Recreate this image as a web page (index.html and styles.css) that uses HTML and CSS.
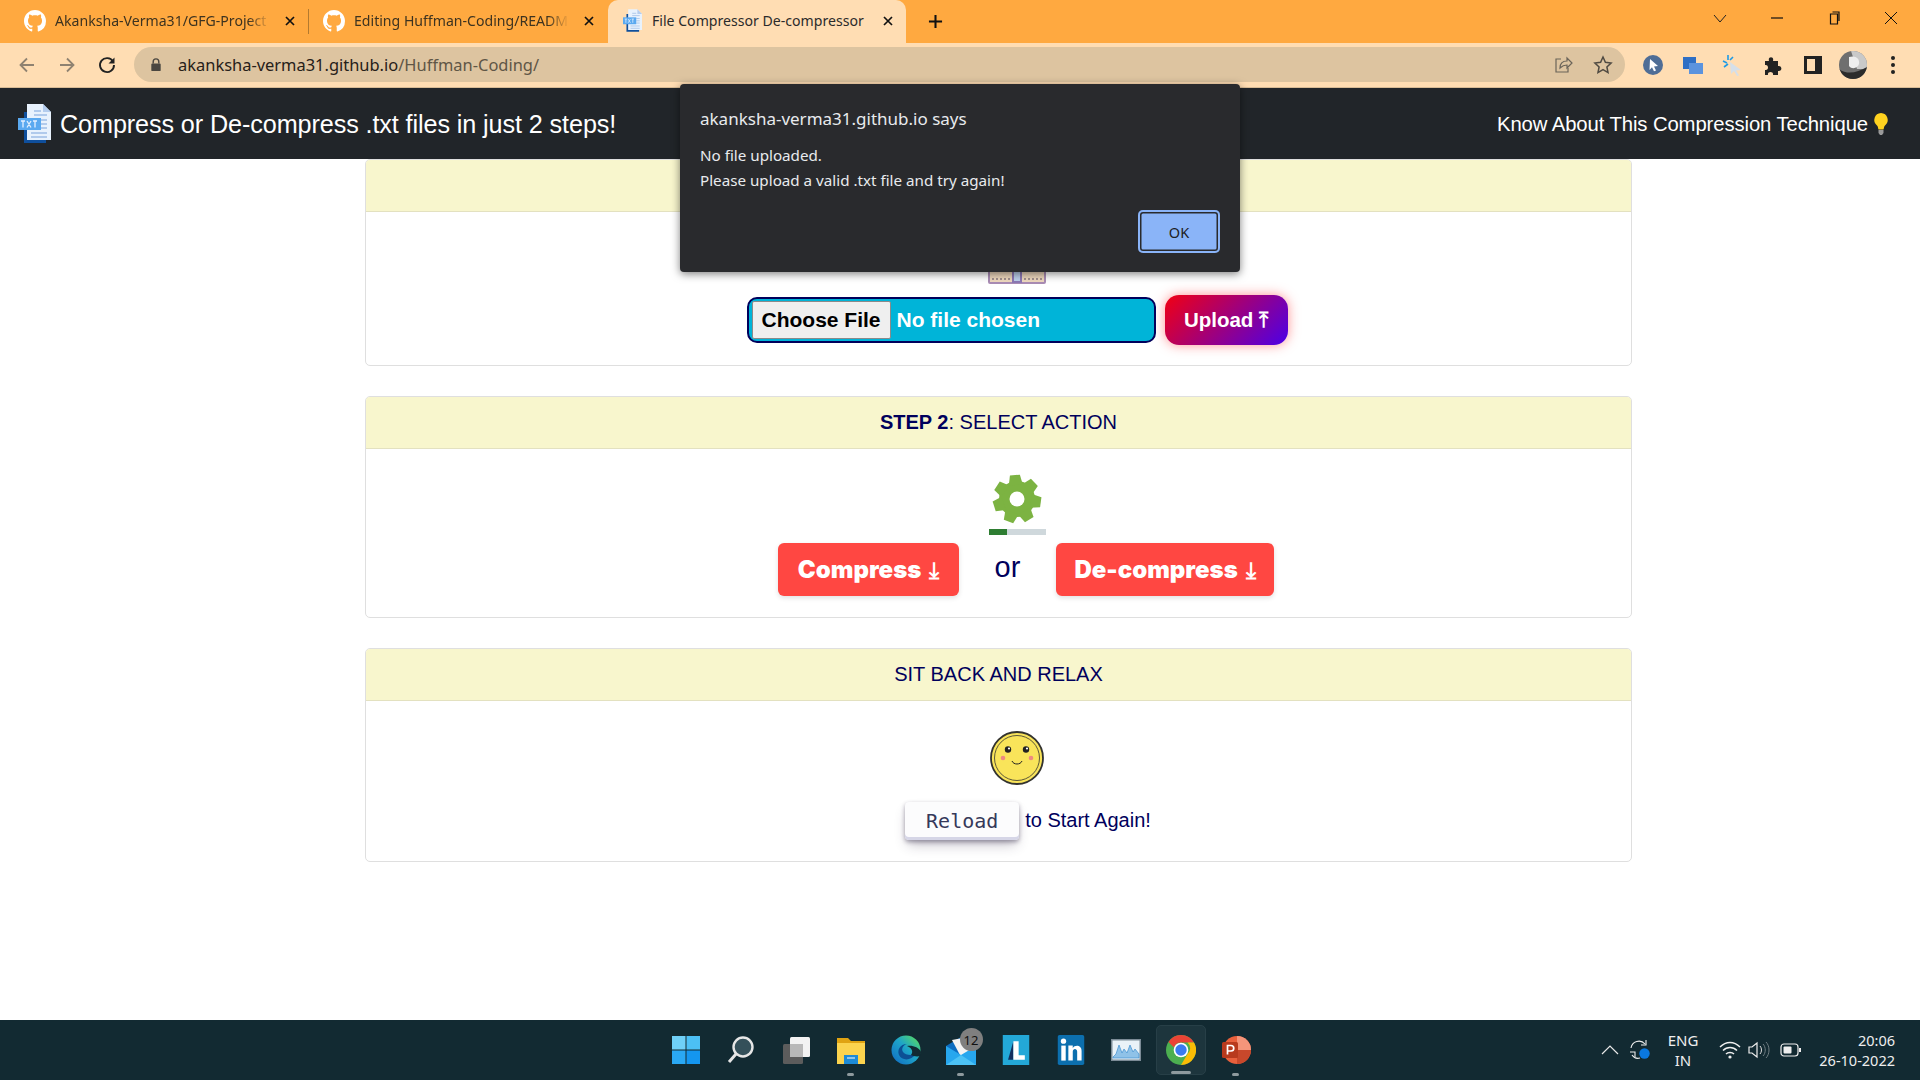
FILE: index.html
```
<!DOCTYPE html>
<html lang="en">
<head>
<meta charset="utf-8">
<title>File Compressor De-compressor</title>
<link rel="stylesheet" href="styles.css">
</head>
<body>
<svg class="defs" width="0" height="0">
  <symbol id="gh" viewBox="0 0 16 16"><path fill="#fff" d="M8 0C3.58 0 0 3.58 0 8c0 3.54 2.29 6.53 5.47 7.59.4.07.55-.17.55-.38 0-.19-.01-.82-.01-1.49-2.01.37-2.53-.49-2.69-.94-.09-.23-.48-.94-.82-1.13-.28-.15-.68-.52-.01-.53.63-.01 1.08.58 1.23.82.72 1.21 1.87.87 2.33.66.07-.52.28-.87.51-1.07-1.78-.2-3.64-.89-3.64-3.95 0-.87.31-1.59.82-2.15-.08-.2-.36-1.02.08-2.12 0 0 .67-.21 2.2.82.64-.18 1.32-.27 2-.27.68 0 1.36.09 2 .27 1.53-1.04 2.2-.82 2.2-.82.44 1.1.16 1.92.08 2.12.51.56.82 1.27.82 2.15 0 3.07-1.87 3.75-3.65 3.95.29.25.54.73.54 1.48 0 1.07-.01 1.93-.01 2.2 0 .21.15.46.55.38A8.013 8.013 0 0016 8c0-4.42-3.58-8-8-8z"/></symbol>
  <symbol id="close" viewBox="0 0 12 12"><path d="M2 2l8 8M10 2l-8 8" stroke="#111" stroke-width="1.7" fill="none"/></symbol>
  <symbol id="doc" viewBox="0 0 33 39">
    <path fill="#0f4f9c" d="M6 8h4v27h18v4H6z"/>
    <path fill="#e8f2fd" d="M9 0h16l8 8v28H9z"/><path fill="#b4cdee" d="M25 0l8 8h-8z"/>
    <path stroke="#9dbde6" stroke-width="1.3" d="M16 7h7M16 11h13M23 16h6M23 20h6M23 24h6M13 29h16M13 33h16"/>
    <path fill="#5aa9f0" d="M0 14h23v12H0z"/><path stroke="#e3f0ff" stroke-width="1.3" fill="none" d="M3 17h4M5 17v6.500M9 17l4 6.500M13 17l-4 6.500M15 17h4M17 17v6.500"/>
  </symbol>
</svg>

<div class="chrome">
  <div class="tabstrip">
    <div class="tab tab-first">
      <svg class="fav"><use href="#gh"/></svg>
      <span class="tab-title">Akanksha-Verma31/GFG-Project</span>
      <svg class="tab-x"><use href="#close"/></svg>
    </div>
    <div class="tab-sep"></div>
    <div class="tab tab-second">
      <svg class="fav"><use href="#gh"/></svg>
      <span class="tab-title">Editing Huffman-Coding/READM</span>
      <svg class="tab-x"><use href="#close"/></svg>
    </div>
    <div class="tab tab-active">
      <svg class="fav-doc"><use href="#doc"/></svg>
      <span class="tab-title tab-title-full">File Compressor De-compressor</span>
      <svg class="tab-x"><use href="#close"/></svg>
    </div>
    <svg class="newtab" viewBox="0 0 16 16"><path d="M8 1v14M1 8h14" stroke="#111" stroke-width="2.2"/></svg>
    <div class="winctl">
      <svg viewBox="0 0 14 14"><path d="M1 4l6 7 6-7" stroke="#222" fill="none"/></svg>
      <svg viewBox="0 0 14 14"><path d="M1 7h12" stroke="#111" stroke-width="1.2"/></svg>
      <svg viewBox="0 0 14 14"><path d="M3.500 3h7v10h-7zM5.500 1h6.500v9" stroke="#111" fill="none" stroke-width="1.2"/></svg>
      <svg viewBox="0 0 14 14"><path d="M1 1l12 12M13 1L1 13" stroke="#111" fill="none"/></svg>
    </div>
  </div>
  <div class="toolbar">
    <svg class="nav-ic" viewBox="0 0 20 20"><path d="M17 10H4M10 3.500L3.500 10l6.500 6.500" stroke="#8f8271" stroke-width="1.8" fill="none"/></svg>
    <svg class="nav-ic" viewBox="0 0 20 20"><path d="M3 10h13M10 3.500l6.500 6.500-6.500 6.500" stroke="#8f8271" stroke-width="1.8" fill="none"/></svg>
    <svg class="nav-ic" viewBox="0 0 20 20"><path d="M16 6.500A7 7 0 1 0 17 10" stroke="#222" stroke-width="1.9" fill="none"/><path d="M17.500 2.500v6h-6z" fill="#222"/></svg>
    <div class="omnibox">
      <svg class="lock" viewBox="0 0 12 16"><path d="M3 7V5a3 3 0 0 1 6 0v2" stroke="#4a4640" stroke-width="1.500" fill="none"/><rect x="1" y="7" width="10" height="8" rx="1" fill="#4a4640"/></svg>
      <span class="url">akanksha-verma31.github.io<span class="url-path">/Huffman-Coding/</span></span>
      <svg class="omni-ic" viewBox="0 0 20 20"><path d="M8 4H3v13h12v-4" stroke="#6b6459" stroke-width="1.200" fill="none"/><path d="M7 13c0-5 3-7 7-7V3l5 5-5 5v-3c-3 0-5 1-7 3z" stroke="#6b6459" stroke-width="1.200" fill="none"/></svg>
      <svg class="omni-ic" viewBox="0 0 20 20"><path d="M10 2l2.400 5.300 5.700.7-4.200 3.900 1.100 5.700-5-2.900-5 2.900 1.100-5.700L1.900 8l5.700-.7z" stroke="#4f4a42" stroke-width="1.500" fill="none"/></svg>
    </div>
    <div class="ext-row">
      <svg viewBox="0 0 22 22"><circle cx="11" cy="11" r="10" fill="#4f6d96"/><path d="M8 5l8 7-4 .5 2 4-2 .8-2-4-2.500 2.700z" fill="#fff"/></svg>
      <svg viewBox="0 0 22 22"><path d="M1 3h13v12H1z" fill="#2f6fc4"/><path d="M7 9h14v11H7z" fill="#5b93de"/></svg>
      <svg viewBox="0 0 22 22"><path d="M6 1v5M1 7l4 2M11 3L8 6M2 13l4-3" stroke="#1f9be6" stroke-width="1.600"/><path d="M8 8l11 8-5 .5 3 5-2 .5-3-5-3 3z" fill="#d5dfe9"/></svg>
      <svg viewBox="0 0 22 22"><path d="M3 7h4c-1.500-5 5.500-5 4 0h5v5c4.500-1 4.500 6 0 5v4h-5c1-4-6-4-5 0H3v-5c4 1 4-6 0-5z" fill="#222"/></svg>
      <svg viewBox="0 0 22 22"><path d="M2 2h18v18H2z" fill="#222"/><path d="M5 5h8v12H5z" fill="#ffddb3"/></svg>
      <svg viewBox="0 0 28 28"><defs><clipPath id="avc"><circle cx="14" cy="14" r="14"/></clipPath></defs><g clip-path="url(#avc)"><path d="M0 0h28v28H0z" fill="#6f6f6f"/><path d="M12 0h16v18H18z" fill="#c9c9c9"/><path d="M10 6c6-2 11 1 10 7-1 4-7 6-10 2z" fill="#eee"/><path d="M0 18c8 6 18 4 28-2v12H0z" fill="#2b2b2b"/></g></svg>
      <svg viewBox="0 0 22 22"><circle cx="11" cy="4" r="2" fill="#222"/><circle cx="11" cy="11" r="2" fill="#222"/><circle cx="11" cy="18" r="2" fill="#222"/></svg>
    </div>
  </div>
</div>

<div class="viewport">
  <nav class="navbar">
    <div class="brand"><svg class="brand-ic"><use href="#doc"/></svg><span class="nav-text">Compress or De-compress .txt files in just 2 steps!</span></div>
    <div class="nav-link"><span class="nav-text">Know About This Compression Technique</span><svg class="bulb" viewBox="0 0 16 24"><path d="M8 1a7 7 0 0 0-4 12.500c1 1 1 2.500 1.500 4h5c.5-1.500.5-3 1.500-4A7 7 0 0 0 8 1z" fill="#ffd21f"/><path d="M5.500 18h5v3l-1.500 2H7l-1.500-2z" fill="#9a9a9a"/></svg></div>
  </nav>
  <main class="page">
    <section class="card">
      <header class="card-h"></header>
      <div class="card-b body-1">
        <div class="slot-1">
          <svg class="box-ic" viewBox="0 0 60 14"><path d="M1 0h58v11a2 2 0 0 1-2 2H3a2 2 0 0 1-2-2z" fill="#a98cb4" /><path d="M3 0h22v11H3zM35 0h22v11H35z" fill="#efd9bf"/><path d="M25 0h10v12H25z" fill="#8c78b4"/><path d="M27 0h6v10h-6z" fill="#bcd0ec"/><path d="M5 8h18M37 8h18" stroke="#8a7a80" stroke-width="1.500" stroke-dasharray="2 2"/></svg>
        </div>
        <div class="upload-row">
          <div class="file-input"><span class="file-btn">Choose File</span><span class="file-name">No file chosen</span></div>
          <button class="upload-btn">Upload <span class="arrow">⤒</span></button>
        </div>
      </div>
    </section>
    <section class="card">
      <header class="card-h"><b>STEP 2</b>: SELECT ACTION</header>
      <div class="card-b body-2">
        <svg class="gear" viewBox="0 0 50 50">
          <g fill="#7cb342">
            <circle cx="25" cy="25" r="18"/>
            <path d="M20 1h10l2 10H18z" transform="rotate(-5 25 25)"/>
            <path d="M20 1h10l2 10H18z" transform="rotate(46.400 25 25)"/>
            <path d="M20 1h10l2 10H18z" transform="rotate(97.900 25 25)"/>
            <path d="M20 1h10l2 10H18z" transform="rotate(149.300 25 25)"/>
            <path d="M20 1h10l2 10H18z" transform="rotate(200.700 25 25)"/>
            <path d="M20 1h10l2 10H18z" transform="rotate(252.100 25 25)"/>
            <path d="M20 1h10l2 10H18z" transform="rotate(303.600 25 25)"/>
          </g>
          <circle cx="25" cy="25" r="7.500" fill="#fff"/>
        </svg>
        <div class="progress"><div class="progress-fill"></div></div>
        <div class="action-row">
          <button class="red-btn">Compress <span class="arrow-s">⤓</span></button>
          <span class="or">or</span>
          <button class="red-btn">De-compress <span class="arrow-s">⤓</span></button>
        </div>
      </div>
    </section>
    <section class="card">
      <header class="card-h">SIT BACK AND RELAX</header>
      <div class="card-b body-3">
        <svg class="smile" viewBox="0 0 54 54"><circle cx="27" cy="27" r="26" fill="#f9e45a" stroke="#33332f" stroke-width="1.800"/><circle cx="27" cy="27" r="22.500" fill="none" stroke="#33332f" stroke-width=".8"/><circle cx="18" cy="18.500" r="3.200" fill="#222"/><circle cx="36" cy="18.500" r="3.200" fill="#222"/><circle cx="19" cy="17.500" r="1.100" fill="#fff"/><circle cx="37" cy="17.500" r="1.100" fill="#fff"/><circle cx="13" cy="27" r="2.300" fill="#ee8a80"/><circle cx="41" cy="27" r="2.300" fill="#ee8a80"/><path d="M22 30c1.500 4 8.500 4 10 0" stroke="#222" fill="none" stroke-width="1"/></svg>
        <div class="reload-row"><button class="reload-btn">Reload</button><span class="reload-text">to Start Again!</span></div>
      </div>
    </section>
  </main>
</div>

<footer class="taskbar">
  <div></div>
  <div class="tb-apps">
    <div class="tb-app"><svg viewBox="0 0 30 30"><path d="M1 1h13.500v13.500H1z" fill="#6fd0f7"/><path d="M15.500 1H29v13.500H15.500z" fill="#4cc0f5"/><path d="M1 15.500h13.500V29H1z" fill="#2aa8f4"/><path d="M15.500 15.500H29V29H15.500z" fill="#1496f0"/></svg></div>
    <div class="tb-app"><svg viewBox="0 0 30 30"><circle cx="17" cy="12" r="9.500" fill="#34505a" stroke="#e6e6e6" stroke-width="2.400"/><path d="M10 19l-7 8" stroke="#e6e6e6" stroke-width="3"/></svg></div>
    <div class="tb-app"><svg viewBox="0 0 30 30"><rect x="9" y="2" width="20" height="20" rx="1.500" fill="#f2f2f2"/><rect x="2" y="9" width="20" height="20" rx="1.500" fill="#5c5c5c"/><path d="M9 9h13v13H9z" fill="#b8b8b8"/></svg></div>
    <div class="tb-app tb-dot"><svg viewBox="0 0 30 30"><path d="M1 3h11l3 3h14v4H1z" fill="#e0a312"/><path d="M1 8h28v21H1z" fill="#fbd34e"/><path d="M8 20h14v9H8z" fill="#1c8ad6"/><path d="M11 23h8" stroke="#fff" stroke-width="1"/></svg></div>
    <div class="tb-app"><svg viewBox="0 0 30 30"><defs><linearGradient id="edge" x1=".9" y1=".1" x2=".1" y2=".9"><stop offset="0" stop-color="#52d66a"/><stop offset=".45" stop-color="#1ea5c8"/><stop offset="1" stop-color="#1273c4"/></linearGradient></defs><circle cx="15" cy="15" r="14.500" fill="url(#edge)"/><path d="M25 19c-5 7-14 7-17 1-2-5 1-11 8-11-4 1-6 5-4 8 2 3 8 4 13 2z" fill="#0c4f94"/><path d="M16 11c5-1 12 1 14 6l-1 4c-3 1-7 0-9-1 2-2 2-7-4-9z" fill="#122a32"/></svg></div>
    <div class="tb-app tb-dot"><svg viewBox="0 0 30 30"><path d="M0 11L15 2l15 9v19H0z" fill="#0c6cc0"/><path d="M6 5l16-3 5 12-12 8z" fill="#f3f3f3"/><path d="M0 11l15 9 15-9v19H0z" fill="#27a7ee"/><path d="M15 20l15 10H0z" fill="#4cc2f5"/></svg><span class="badge">12</span></div>
    <div class="tb-app"><svg viewBox="0 0 30 34"><path d="M0 0h30v34H0z" fill="#23a8d8"/><path d="M6 28L12 7v21z" fill="#13305f"/><path d="M12 7h6v16h7v5H12z" fill="#fff"/></svg></div>
    <div class="tb-app"><svg viewBox="0 0 30 34"><rect width="30" height="34" rx="2" fill="#0c6fae"/><rect x="4" y="12" width="5" height="17" fill="#fff"/><circle cx="6.500" cy="7" r="3" fill="#fff"/><path d="M12 12h5v3c2-4 10-4 10 3v11h-5V19c0-4-5-4-5 0v10h-5z" fill="#fff"/></svg></div>
    <div class="tb-app"><svg viewBox="0 0 30 30"><path d="M0 4h30v22H0z" fill="#7b8b96"/><path d="M1.500 5.500h27v19h-27z" fill="#e9f2f8"/><path d="M2 22l3-3 3-9 3 8 2-4 3 4 3-8 3 7 2-3 4 5v4H2z" fill="#8fc2e8" stroke="#3f8fd0" stroke-width=".7"/></svg></div>
    <div class="tb-app tb-active"><svg viewBox="0 0 30 30"><circle cx="15" cy="15" r="15" fill="#4caf50"/><path d="M15 0a15 15 0 0 1 13 7.500H15a7.500 7.500 0 0 0-7 5L2.500 7A15 15 0 0 1 15 0z" fill="#ea4335"/><path d="M28 7.500A15 15 0 0 1 15 30l6.500-11a7.500 7.500 0 0 0 0-11.500z" fill="#fbbc05"/><circle cx="15" cy="15" r="7.300" fill="#fff"/><circle cx="15" cy="15" r="5.700" fill="#3a7bf0"/></svg></div>
    <div class="tb-app tb-dot"><svg viewBox="0 0 30 30"><circle cx="16" cy="15" r="14" fill="#e8603c"/><path d="M16 1a14 14 0 0 1 14 14H16z" fill="#f4957a"/><path d="M16 15h14a14 14 0 0 1-14 14z" fill="#c8482b"/><rect x="1" y="7" width="16" height="16" rx="1.500" fill="#b83a1d"/><path d="M6.500 19.500V10.500h3.500a2.700 2.700 0 0 1 0 5.500H6.500" stroke="#fff" stroke-width="1.700" fill="none"/></svg></div>
  </div>
  <div class="tray">
    <svg class="tray-chev" viewBox="0 0 18 10"><path d="M1 9l8-8 8 8" stroke="#e8e8e8" stroke-width="1.200" fill="none"/></svg>
    <svg class="tray-sync" viewBox="0 0 22 22"><path d="M2 9a8 8 0 0 1 14-4M3 16c2 3 5 4 8 3" stroke="#eee" stroke-width="1.100" fill="none"/><path d="M17 1v5h-5M1 13h5v5" stroke="#eee" stroke-width="1.100" fill="none"/><circle cx="15.500" cy="14.500" r="5.200" fill="#0a78e0"/></svg>
    <div class="tray-lang"><span>ENG</span><span>IN</span></div>
    <svg class="tray-ic" viewBox="0 0 22 18"><path d="M1 6c6-6 14-6 20 0M4 9.500c4-4 10-4 14 0M7 13c2-2 6-2 8 0" stroke="#eee" stroke-width="1.500" fill="none"/><circle cx="11" cy="16" r="1.600" fill="#eee"/></svg>
    <svg class="tray-ic tray-vol" viewBox="0 0 22 18"><path d="M1 6h3l5-4v14l-5-4H1z" stroke="#eee" stroke-width="1.200" fill="none"/><path d="M12 5c2 2 2 6 0 8" stroke="#ddd" fill="none"/><path d="M15 3c3 3 3 9 0 12M18 1c4 4 4 12 0 16" stroke="#6f7d82" fill="none"/></svg>
    <svg class="tray-ic" viewBox="0 0 22 18"><rect x="1" y="3" width="17" height="12" rx="3" stroke="#eee" stroke-width="1.200" fill="none"/><rect x="3.500" y="5.500" width="8" height="7" rx="1" fill="#eee"/><rect x="19" y="7" width="2" height="4" fill="#eee"/></svg>
    <div class="tray-clock"><span>20:06</span><span>26-10-2022</span></div>
  </div>
</footer>

<div class="dialog" role="alertdialog">
  <div class="dlg-title">akanksha-verma31.github.io says</div>
  <div class="dlg-msg">No file uploaded.</div>
  <div class="dlg-msg">Please upload a valid .txt file and try again!</div>
  <div class="dlg-actions"><button class="dlg-ok">OK</button></div>
</div>
</body>
</html>
```

FILE: styles.css
```
* { box-sizing: border-box; }
html, body { margin: 0; height: 100%; }
body { width: 1920px; height: 1080px; display: flex; flex-direction: column; overflow: hidden; font-family: "Liberation Sans", Arial, sans-serif; background: #fff; position: relative; }
.defs { position: absolute; }
svg { display: block; flex: none; }
button { font: inherit; border: 0; cursor: pointer; }

/* browser chrome */
.chrome { flex: none; font-family: "Noto Sans", sans-serif; }
.tabstrip { height: 43px; background: #ffa940; display: flex; align-items: center; position: relative; }
.tab { height: 43px; display: flex; align-items: center; font-size: 14.100px; color: #3d3320; flex: none; }
.tab-first { width: 308px; padding-left: 24px; }
.tab-second { width: 299px; padding-left: 14px; }
.tab-active { width: 298px; padding-left: 15px; background: #ffddb3; border-radius: 10px 10px 0 0; color: #2b2b2b; }
.tab-sep { width: 1px; height: 25px; background: #b37a2f; flex: none; }
.fav { width: 22px; height: 22px; margin-top: -2px; }
.fav-doc { width: 19px; height: 23px; margin-top: -2px; }
.tab-title { width: 215px; margin-left: 9px; margin-top: -2px; white-space: nowrap; -webkit-mask-image: linear-gradient(90deg, #000 90%, transparent); mask-image: linear-gradient(90deg, #000 90%, transparent); }
.tab-title-full { width: 222px; margin-left: 10px; -webkit-mask-image: none; mask-image: none; }
.tab-x { width: 12px; height: 12px; margin-left: 14px; margin-top: -1px; }
.tab-active .tab-x { margin-left: 8px; }
.newtab { width: 15px; height: 15px; margin-left: 22px; margin-top: -1px; }
.winctl { margin-left: auto; display: flex; gap: 43px; padding-right: 22px; margin-top: -7px; }
.winctl svg { width: 14px; height: 14px; }
.toolbar { height: 45px; background: #ffddb3; display: flex; align-items: center; padding-left: 17px; border-bottom: 1px solid #d8bb95; }
.nav-ic { width: 20px; height: 20px; margin-right: 20px; }
.nav-ic:nth-child(3) { margin-right: 17px; }
.omnibox { width: 1491px; height: 35px; background: #ddc4a0; border-radius: 18px; display: flex; align-items: center; padding-left: 16px; padding-right: 12px; margin-top: -1px; }
.lock { width: 12px; height: 15px; }
.url { margin-left: 16px; font-size: 16.450px; color: #262019; flex: 1; white-space: nowrap; }
.url-path { color: #5f5646; }
.omni-ic { width: 20px; height: 20px; margin-left: 20px; }
.ext-row { display: flex; align-items: center; margin-left: 17px; gap: 18px; }
.ext-row svg { width: 22px; height: 22px; }
.ext-row svg:nth-child(6) { width: 28px; height: 28px; margin: 0 -3px; }

/* page */
.viewport { flex: 1; min-height: 0; display: flex; flex-direction: column; overflow: hidden; }
.navbar { height: 71px; flex: none; background: #212529; color: #fff; display: flex; align-items: center; justify-content: space-between; padding: 0 31px 0 18px; }
.nav-text { padding-top: 1px; }
.brand { display: flex; align-items: center; font-size: 25.200px; letter-spacing: -.1px; }
.brand-ic { width: 33px; height: 39px; margin-right: 9px; }
.nav-link { display: flex; align-items: center; font-size: 20.300px; letter-spacing: -.1px; }
.bulb { width: 16px; height: 24px; margin-left: 5px; }
.page { flex: 1; padding: 0 288px 0 365px; display: flex; flex-direction: column; gap: 30px; color: #00005c; }
.card { border: 1px solid #dfdfdf; border-radius: 5px; overflow: hidden; background: #fff; }
.card-h { height: 52px; background: #f8f6cd; border-bottom: 1px solid #e3e1c0; display: flex; align-items: center; justify-content: center; font-size: 20px; }
.card-h b { font-weight: 700; }
.card-b { display: flex; flex-direction: column; align-items: center; padding-left: 37px; }
.body-1 { padding-top: 13px; padding-bottom: 20px; }
.slot-1 { height: 60px; display: flex; align-items: flex-end; margin-bottom: 10px; }
.box-ic { width: 60px; height: 14px; }
.upload-row { display: flex; align-items: center; gap: 9px; height: 50px; }
.file-input { width: 409px; height: 46px; background: #00b4d8; border: 2px solid #00005c; border-radius: 10px; display: flex; align-items: center; padding-left: 3px; font-size: 21px; font-weight: 700; color: #fff; }
.file-btn { width: 139px; height: 38px; background: #efefef; border: 1px solid #8a8a8a; color: #000; display: flex; align-items: center; justify-content: center; border-radius: 2px; }
.file-name { margin-left: 6px; }
.upload-btn { width: 123px; height: 50px; border-radius: 14px; background: linear-gradient(135deg, #f20012, #4b00e8); color: #fff; font-size: 20.500px; font-weight: 700; box-shadow: 0 0 12px rgba(255, 40, 40, .5); font-family: "Liberation Sans", sans-serif; }
.arrow, .arrow-s { font-family: "DejaVu Sans", sans-serif; font-weight: 700; }
.arrow { font-size: 21px; }
.body-2 { padding-top: 26px; padding-bottom: 21px; }
.gear { width: 50px; height: 50px; margin-top: -1px; }
.progress { width: 57px; height: 6px; background: #cfd8dc; margin-top: 5px; }
.progress-fill { width: 33%; height: 100%; background: #2e7d32; }
.action-row { display: flex; align-items: center; margin-top: 8px; margin-left: 18px; }
.red-btn { height: 53px; padding: 0; background: #ff4742; color: #fff; border-radius: 6px; font-family: Inter, sans-serif; font-size: 24px; font-weight: 900; box-shadow: 0 2px 5px rgba(0, 0, 0, .12); white-space: nowrap; }
.red-btn:first-child { width: 181px; }
.red-btn:last-child { width: 218px; }
.arrow-s { font-size: 23px; margin-left: 3px; }
.or { width: 97px; text-align: center; font-size: 29px; margin-top: -5px; }
.body-3 { padding-top: 30px; padding-bottom: 21px; }
.smile { width: 54px; height: 54px; }
.reload-row { display: flex; align-items: center; margin-top: 17px; margin-left: 22px; }
.reload-btn { width: 114px; height: 38px; background: #fcfcfd; color: #36395a; border-radius: 4px; font-family: "DejaVu Sans Mono", monospace; font-size: 20px; box-shadow: rgba(45, 35, 66, .4) 0 2px 4px, rgba(45, 35, 66, .3) 0 7px 13px -3px, #d6d6e7 0 -3px 0 inset; }
.reload-text { margin-left: 6px; font-size: 20px; margin-top: -1px; }

/* taskbar */
.taskbar { height: 60px; flex: none; background: #122a32; display: grid; grid-template-columns: 1fr auto 1fr; align-items: center; font-family: "Noto Sans", sans-serif; color: #eee; }
.tb-apps { display: flex; align-items: center; gap: 5px; padding-left: 1px; }
.tb-app { width: 50px; height: 50px; display: flex; align-items: center; justify-content: center; position: relative; border-radius: 5px; }
.tb-app svg { width: 30px; height: 30px; }
.tb-dot::after, .tb-active::after { content: ""; position: absolute; left: 50%; bottom: -1px; width: 7px; height: 3px; margin-left: -3.500px; background: #8e9a9e; border-radius: 2px; }
.tb-active { background: #1d353d; border: 1px solid #273f47; }
.tb-active::after { width: 20px; margin-left: -10px; bottom: 0; }
.badge { position: absolute; top: 3px; right: 3px; width: 23px; height: 23px; border-radius: 50%; background: #7f7f7f; color: #111; font-size: 13px; display: flex; align-items: center; justify-content: center; }
.tray { display: flex; align-items: center; justify-content: flex-end; padding-right: 25px; }
.tray-chev { width: 18px; height: 10px; margin-right: 10px; }
.tray-sync { width: 22px; height: 22px; margin-right: 12px; }
.tray-lang { display: flex; flex-direction: column; align-items: center; font-size: 15px; line-height: 20px; width: 40px; margin-right: 16px; }
.tray-ic { width: 22px; height: 18px; margin-right: 7px; }
.tray-vol { margin-right: 10px; }
.tray-clock { display: flex; flex-direction: column; align-items: flex-end; font-size: 14.500px; line-height: 20px; width: 76px; margin-left: 10px; }

/* alert dialog */
.dialog { position: absolute; left: 680px; top: 84px; width: 560px; height: 188px; background: #292a2d; border-radius: 4px; box-shadow: 0 2px 8px rgba(0, 0, 0, .5); padding: 24px 20px 0; color: #e8eaed; font-family: "Noto Sans", sans-serif; }
.dlg-title { font-size: 17px; line-height: 22px; margin-bottom: 13px; }
.dlg-msg { font-size: 15.200px; line-height: 25px; }
.dlg-actions { position: absolute; right: 20px; bottom: 19px; }
.dlg-ok { width: 82px; height: 43px; background: #8ab4f8; border-radius: 5px; color: #202124; font-family: "Noto Sans", sans-serif; font-size: 14.500px; box-shadow: inset 0 0 0 2px #8ab4f8, inset 0 0 0 3.500px #292a2d; }
```
